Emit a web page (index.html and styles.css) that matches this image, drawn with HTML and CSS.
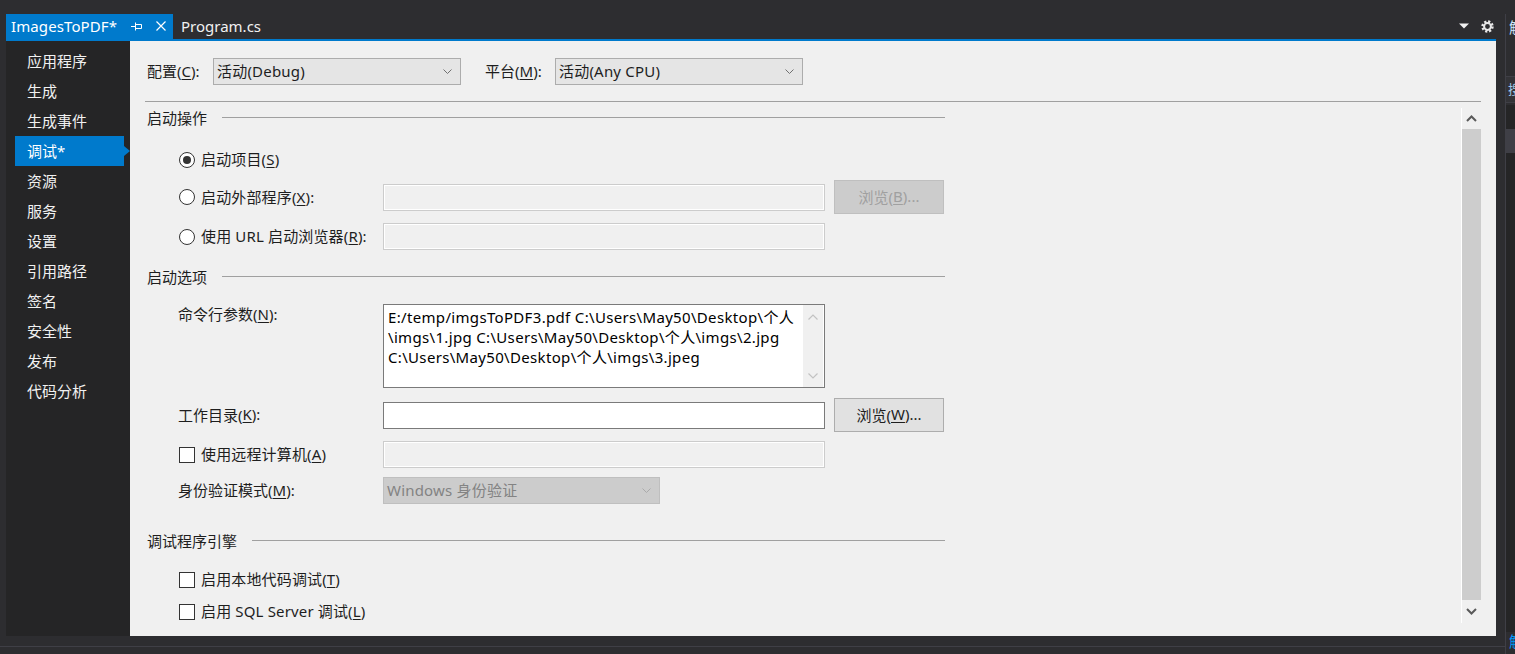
FILE: index.html
```html
<!DOCTYPE html>
<html lang="zh-CN">
<head>
<meta charset="utf-8">
<title>ImagesToPDF</title>
<link rel="stylesheet" href="styles.css">
</head>
<body>
<div class="app">
  <div class="left-area">
    <div class="doc">
      <div class="tabbar">
        <div class="tab active">
          <span class="tab-title">ImagesToPDF*</span>
          <svg class="pin" width="11" height="10" viewBox="0 0 11 10"><path d="M0 5.5H4M4.5 1.5V9.5M4.5 3.5H10.5V7.5H4.5" fill="none" stroke="#fff" stroke-width="1"/></svg>
          <svg class="close" width="10" height="10" viewBox="0 0 10 10"><path d="M0.5 0.5L9.5 9.5M9.5 0.5L0.5 9.5" stroke="#fff" stroke-width="1.2"/></svg>
        </div>
        <div class="tab">Program.cs</div>
        <div class="tab-tools">
          <svg width="10" height="6" viewBox="0 0 10 6"><path d="M0 0.5H10L5 5.5Z" fill="#f1f1f1"/></svg>
          <svg class="gear" width="13" height="13" viewBox="0 0 13 13"><circle cx="6.5" cy="6.5" r="4.9" fill="none" stroke="#e8e8e8" stroke-width="2.6" stroke-dasharray="2.1 1.75"/><circle cx="6.5" cy="6.5" r="3.4" fill="none" stroke="#e8e8e8" stroke-width="2"/></svg>
        </div>
      </div>
      <div class="blueline"></div>
      <div class="docbody">
        <nav class="nav">
          <div class="nav-item">应用程序</div>
          <div class="nav-item">生成</div>
          <div class="nav-item">生成事件</div>
          <div class="nav-item selected">调试*</div>
          <div class="nav-item">资源</div>
          <div class="nav-item">服务</div>
          <div class="nav-item">设置</div>
          <div class="nav-item">引用路径</div>
          <div class="nav-item">签名</div>
          <div class="nav-item">安全性</div>
          <div class="nav-item">发布</div>
          <div class="nav-item">代码分析</div>
        </nav>
        <main class="main">
          <div class="toprow">
            <span class="toplabel l1">配置(<u>C</u>):</span>
            <div class="combo">
              <span>活动(Debug)</span>
              <svg width="9" height="5" viewBox="0 0 9 5"><path d="M0.5 0.5L4.5 4.5L8.5 0.5" fill="none" stroke="#707070"/></svg>
            </div>
            <span class="toplabel l2">平台(<u>M</u>):</span>
            <div class="combo">
              <span>活动(Any CPU)</span>
              <svg width="9" height="5" viewBox="0 0 9 5"><path d="M0.5 0.5L4.5 4.5L8.5 0.5" fill="none" stroke="#707070"/></svg>
            </div>
          </div>
          <div class="separator"></div>
          <div class="scrollarea">
            <div class="content">
              <div class="section h1"><span>启动操作</span><i></i></div>

              <div class="row r-radio1">
                <span class="radio checked"></span><span class="opt">启动项目(<u>S</u>)</span>
              </div>
              <div class="row r-radio2">
                <div class="lab"><span class="radio"></span><span class="opt">启动外部程序(<u>X</u>):</span></div>
                <div class="field disabled"></div>
                <div class="btn disabled">浏览(<u>B</u>)...</div>
              </div>
              <div class="row r-radio3">
                <div class="lab"><span class="radio"></span><span class="opt">使用 URL 启动浏览器(<u>R</u>):</span></div>
                <div class="field disabled"></div>
              </div>

              <div class="section h2"><span>启动选项</span><i></i></div>

              <div class="row r-cmd">
                <div class="lab top">命令行参数(<u>N</u>):</div>
                <div class="textarea">
                  <div class="ta-text">E:/temp/imgsToPDF3.pdf C:\Users\May50\Desktop\个人<br>\imgs\1.jpg C:\Users\May50\Desktop\个人\imgs\2.jpg<br>C:\Users\May50\Desktop\个人\imgs\3.jpeg</div>
                  <div class="ta-scroll">
                    <svg width="10" height="6" viewBox="0 0 10 6"><path d="M0.5 5.5L5 1L9.5 5.5" fill="none" stroke="#c2c2c2" stroke-width="1.2"/></svg>
                    <svg width="10" height="6" viewBox="0 0 10 6"><path d="M0.5 0.5L5 5L9.5 0.5" fill="none" stroke="#c2c2c2" stroke-width="1.2"/></svg>
                  </div>
                </div>
              </div>
              <div class="row r-wd">
                <div class="lab">工作目录(<u>K</u>):</div>
                <div class="field enabled"></div>
                <div class="btn">浏览(<u>W</u>)...</div>
              </div>
              <div class="row r-remote">
                <div class="lab"><span class="check"></span><span class="opt">使用远程计算机(<u>A</u>)</span></div>
                <div class="field disabled"></div>
              </div>
              <div class="row r-auth">
                <div class="lab">身份验证模式(<u>M</u>):</div>
                <div class="combo dis">
                  <span>Windows 身份验证</span>
                  <svg width="9" height="5" viewBox="0 0 9 5"><path d="M0.5 0.5L4.5 4.5L8.5 0.5" fill="none" stroke="#aaaaaa"/></svg>
                </div>
              </div>

              <div class="section h3"><span>调试程序引擎</span><i></i></div>

              <div class="row r-chk1">
                <span class="check"></span><span class="opt">启用本地代码调试(<u>T</u>)</span>
              </div>
              <div class="row r-chk2">
                <span class="check"></span><span class="opt">启用 SQL Server 调试(<u>L</u>)</span>
              </div>
            </div>
            <div class="vscroll">
              <div class="vs-btn up"><svg width="11" height="7" viewBox="0 0 11 7"><path d="M1 6L5.5 1.5L10 6" fill="none" stroke="#5a5a5a" stroke-width="2"/></svg></div>
              <div class="vs-thumb"></div>
              <div class="vs-btn down"><svg width="11" height="7" viewBox="0 0 11 7"><path d="M1 1L5.5 5.5L10 1" fill="none" stroke="#5a5a5a" stroke-width="2"/></svg></div>
            </div>
          </div>
        </main>
      </div>
    </div>
    <div class="bottom"></div>
  </div>
  <aside class="toolstrip">
    <div class="ts-title">解</div>
    <div class="ts-search">搜</div>
    <div class="ts-row"></div>
    <div class="ts-row sel"></div>
    <div class="ts-fill"></div>
    <div class="ts-foot">解</div>
  </aside>
</div>
</body>
</html>
```
FILE: styles.css
```css
* { box-sizing: border-box; }
html, body {
  margin: 0;
  padding: 0;
  background: #2d2d30;
  width: 1515px;
  height: 654px;
  overflow: hidden;
  font-family: "Noto Sans", "Noto Sans CJK SC", sans-serif;
  font-size: 15px;
}
u { text-decoration: underline; text-underline-offset: 2px; }

.app { display: flex; width: 1515px; height: 654px; }
.left-area { width: 1505px; display: flex; flex-direction: column; }
.doc { margin-left: 6px; width: 1490px; height: 636px; display: flex; flex-direction: column; }

/* tabs */
.tabbar { height: 39px; padding-top: 14px; display: flex; align-items: stretch; }
.tab {
  display: flex; align-items: center;
  color: #f1f1f1;
  padding-left: 8px;
  padding-bottom: 2px;
  line-height: 20px;
}
.tab.active {
  background: #007acc;
  color: #fff;
  width: 167px;
  padding-left: 5px;
}
.tab .tab-title { width: 120px; letter-spacing: 0.1px; }
.tab .pin { margin-left: 0; }
.tab .close { margin-left: 14px; }
.tab-tools { margin-left: auto; display: flex; align-items: center; gap: 12px; padding-right: 2px; padding-bottom: 1px; }
.blueline { height: 2px; background: #007acc; }

.docbody { flex: 1; display: flex; }

/* nav */
.nav { width: 124px; background: #252526; padding-top: 5px; }
.nav-item {
  height: 30px;
  line-height: 30px;
  margin-left: 9px;
  width: 109px;
  padding-left: 12px;
  color: #f1f1f1;
  position: relative;
}
.nav-item.selected { background: #007acc; color: #fff; }
.nav-item.selected::after {
  content: "";
  position: absolute;
  right: -6px;
  top: 10px;
  border-left: 6px solid #007acc;
  border-top: 5px solid transparent;
  border-bottom: 5px solid transparent;
}

/* main */
.main { width: 1366px; background: #f0f0f0; color: #1e1e1e; display: flex; flex-direction: column; }
.toprow { display: flex; align-items: center; padding-top: 17px; padding-left: 17px; height: 44px; }
.toplabel { display: inline-block; padding-bottom: 2px; }
.toplabel.l1 { width: 66px; }
.toplabel.l2 { width: 70px; margin-left: 24px; }
.combo {
  width: 248px; height: 27px;
  background: #e5e5e5;
  border: 1px solid #acacac;
  display: flex; align-items: center; justify-content: space-between;
  padding: 0 8px 0 3px;
}
.combo span { padding-bottom: 2px; letter-spacing: 0.2px; }
.combo.dis { width: 277px; background: #cccccc; border-color: #bfbfbf; color: #838383; }

.separator { margin: 16px 0 0 15px; width: 1336px; height: 1px; background: #a0a0a0; }

.scrollarea { margin-left: 15px; width: 1336px; height: 521px; margin-top: 2px; display: flex; }
.content { width: 1316px; padding-top: 2px; }

.section { display: flex; align-items: center; height: 24px; margin-left: 2px; width: 798px; }
.section span { padding-bottom: 2px; }
.section i { flex: 1; height: 1px; background: #a0a0a0; margin-left: 15px; margin-top: -1px; }

.row { display: flex; align-items: center; margin-left: 33px; }
.lab { width: 205px; display: flex; align-items: center; padding-bottom: 2px; }
.lab .radio, .lab .check { margin-top: 2px; }
.lab.top { align-self: flex-start; line-height: 20px; padding-bottom: 0; }
.opt { margin-left: 6px; padding-bottom: 2px; letter-spacing: 0.15px; }
.lab .opt { padding-bottom: 0; }

.radio {
  width: 16px; height: 16px; border-radius: 50%;
  border: 1px solid #333;
  background: #fff;
  margin-left: 1px;
  display: inline-flex; align-items: center; justify-content: center;
  flex: none;
}
.radio.checked::before { content: ""; width: 8px; height: 8px; border-radius: 50%; background: #333; }
.check {
  width: 16px; height: 16px;
  border: 1px solid #333;
  background: #fff;
  margin-left: 1px;
  flex: none;
}

.field { width: 442px; height: 27px; }
.field.disabled { border: 1px solid #cccccc; box-shadow: inset 0 0 0 1px #ffffff; background: #f0f0f0; }
.field.enabled { border: 1px solid #7a7a7a; background: #fff; }

.btn {
  margin-left: 9px;
  width: 110px; height: 34px;
  background: #e1e1e1;
  border: 1px solid #adadad;
  display: flex; align-items: center; justify-content: center;
  padding-bottom: 2px;
  color: #1e1e1e;
}
.btn.disabled { background: #cccccc; border-color: #bfbfbf; color: #a0a0a0; }

.textarea {
  width: 442px; height: 84px;
  border: 1px solid #7a7a7a;
  background: #fff;
  display: flex;
}
.ta-text { flex: 1; padding: 2px 0 0 4px; line-height: 20px; letter-spacing: 0.33px; white-space: nowrap; overflow: hidden; color: #000; }
.ta-scroll {
  width: 20px; background: #f0f0f0; margin-right: 1px;
  display: flex; flex-direction: column; justify-content: space-between; align-items: center;
  padding: 9px 0 8px;
}

.r-radio1 { height: 24px; margin-top: 17px; }
.r-radio1 .radio { margin-top: 1px; }
.r-radio2 { height: 34px; margin-top: 9px; }
.r-radio3 { height: 27px; margin-top: 9px; }
.h2 { margin-top: 15px; }
.r-cmd { height: 84px; margin-top: 15px; align-items: flex-start; }
.r-wd { height: 34px; margin-top: 10px; }
.r-remote { height: 27px; margin-top: 9px; }
.r-auth { height: 27px; margin-top: 9px; }
.h3 { margin-top: 25px; }
.r-chk1 { height: 24px; margin-top: 14px; }
.r-chk2 { height: 24px; margin-top: 8px; }
.r-chk1 .check, .r-chk2 .check { margin-top: 1px; }

.vscroll {
  width: 20px; margin-top: 4px; height: 515px;
  border-left: 1px solid #ffffff;
  display: flex; flex-direction: column;
}
.vs-btn { height: 21px; display: flex; align-items: center; justify-content: center; }
.vs-thumb { flex: 1; background: #cdcdcd; }
.vs-btn.down { height: 23px; }

/* bottom */
.bottom { height: 18px; position: relative; }
.bottom::after { content: ""; position: absolute; left: 0; right: 0; top: 10px; height: 1px; background: #3f3f46; }

/* right tool strip */
.toolstrip {
  width: 10px;
  margin-top: 14px;
  border-left: 1px solid #3f3f46;
  display: flex; flex-direction: column;
  overflow: hidden;
}
.ts-title { height: 26px; color: #cfe6ff; font-size: 15px; line-height: 26px; padding-left: 3px; white-space: nowrap; }
.ts-search { margin-top: 36px; height: 27px; background: #333337; border-top: 1px solid #3f3f46; border-bottom: 1px solid #3f3f46; color: #9fc7e8; line-height: 25px; padding-left: 2px; font-size: 13px; }
.ts-row { height: 24px; background: #252526; margin-top: 2px; }
.ts-row.sel { background: #3f3f46; margin-top: 0; }
.ts-fill { flex: 1; background: #252526; }
.ts-foot { height: 22px; color: #0097fb; padding-left: 3px; line-height: 18px; background: #2d2d30; }
```
